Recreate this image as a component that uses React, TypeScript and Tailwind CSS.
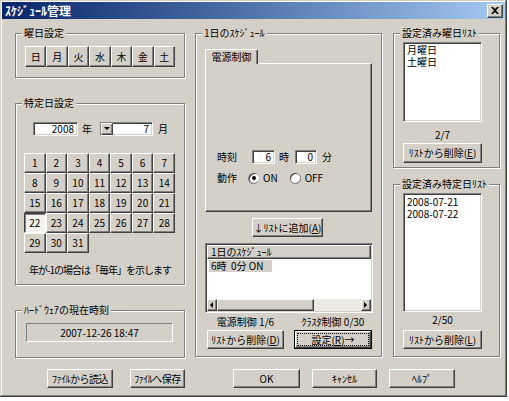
import React from 'react';

const raised =
  'border border-t-white border-l-white border-r-[#404040] border-b-[#404040] shadow-[inset_-1px_-1px_0_#808080]';
const sunken =
  'border border-t-[#808080] border-l-[#808080] border-r-white border-b-white shadow-[inset_1px_1px_0_#404040,inset_-1px_-1px_0_#d4d0c8]';
const etched = 'border border-[#808080] shadow-[inset_1px_1px_0_#fff,1px_1px_0_#fff]';

function Btn({ children, className = '' }: { children: React.ReactNode; className?: string }) {
  return (
    <div className={`flex items-center justify-center whitespace-nowrap bg-[#d4d0c8] ${raised} ${className}`}>{children}</div>
  );
}

function Group({ label, className = '', children }: { label: string; className?: string; children?: React.ReactNode }) {
  return (
    <div className={`relative ${etched} ${className}`}>
      <span className="absolute left-[6px] -top-[8px] bg-[#d4d0c8] px-[2px] leading-[14px] whitespace-nowrap">{label}</span>
      {children}
    </div>
  );
}

function Radio({ checked }: { checked?: boolean }) {
  return (
    <div className="w-[11px] h-[11px] rounded-full bg-[#808080] flex items-center justify-center">
      <div className="w-[10px] h-[10px] rounded-full bg-white flex items-center justify-center shadow-[inset_1px_1px_0_#404040]">
        {checked && <div className="w-[4px] h-[4px] rounded-full bg-black" />}
      </div>
    </div>
  );
}

function Arrow({ dir }: { dir: 'left' | 'right' | 'down' }) {
  const pts = dir === 'left' ? '3,0 0,3 3,6' : dir === 'right' ? '0,0 3,3 0,6' : '0,0 6,0 3,3';
  const w = dir === 'down' ? 7 : 4;
  const h = dir === 'down' ? 4 : 7;
  return (
    <svg width={w} height={h} viewBox={`0 0 ${w} ${h}`}>
      <polygon points={pts} fill="#000" />
    </svg>
  );
}

const weekdays = ['日', '月', '火', '水', '木', '金', '土'];
const days = Array.from({ length: 31 }, (_, i) => i + 1);

export default function App() {
  return (
    <div
      className="w-[509px] h-[401px] bg-white text-black text-[10px] leading-[14px]"
      style={{ fontFamily: '"Noto Sans CJK JP", "Noto Sans", sans-serif' }}
    >
      <div className="w-[507px] h-[397px] bg-[#d4d0c8] p-[2px] flex flex-col shadow-[inset_-1px_-1px_0_#404040,inset_1px_1px_0_#d4d0c8,inset_-2px_-2px_0_#808080,inset_2px_2px_0_#fff]">
        {/* title bar */}
        <div className="h-[17px] flex items-center bg-gradient-to-r from-[#0a246a] to-[#a6caf0] pl-[3px] pr-[2px]">
          <span className="text-white font-bold text-[12px] leading-[16px]">ｽｹｼﾞｭｰﾙ管理</span>
          <div className={`ml-auto w-[16px] h-[14px] ${raised} bg-[#d4d0c8] flex items-center justify-center`}>
            <svg width="8" height="7" viewBox="0 0 8 7">
              <path d="M0 0 L2 0 L4 2 L6 0 L8 0 L5 3.5 L8 7 L6 7 L4 5 L2 7 L0 7 L3 3.5 Z" fill="#000" />
            </svg>
          </div>
        </div>

        {/* main */}
        <div className="flex items-start mt-[14px] ml-[13px]">
          {/* left column */}
          <div className="w-[170px] flex flex-col">
            <Group label="曜日設定" className="h-[45px] pl-[9px] pt-[12px]">
              <div className="grid grid-cols-7 w-[150px] h-[21px]">
                {weekdays.map(d => (
                  <Btn key={d} className="h-[21px]">{d}</Btn>
                ))}
              </div>
            </Group>

            <Group label="特定日設定" className="mt-[25px] h-[182px] pt-[18px]">
              <div className="flex items-center ml-[17px] h-[14px]">
                <div className={`w-[45px] h-[14px] bg-white ${sunken} flex items-center justify-end pr-[3px]`}>2008</div>
                <span className="ml-[4px]">年</span>
                <div className={`ml-[8px] w-[53px] h-[14px] bg-white ${sunken} flex items-center`}>
                  <div className={`w-[12px] h-[12px] ${raised} bg-[#d4d0c8] flex items-center justify-center`}>
                    <Arrow dir="down" />
                  </div>
                  <span className="ml-auto pr-[3px]">7</span>
                </div>
                <span className="ml-[5px]">月</span>
              </div>
              <div className="grid grid-cols-7 w-[151px] ml-[8px] mt-[17px]">
                {days.map(d =>
                  d === 22 ? (
                    <div
                      key={d}
                      className="h-[20px] flex items-center justify-center bg-[#f4f3ef] border border-t-[#404040] border-l-[#404040] border-r-white border-b-white shadow-[inset_1px_1px_0_#808080]"
                    >
                      {d}
                    </div>
                  ) : (
                    <Btn key={d} className="h-[20px]">{d}</Btn>
                  )
                )}
              </div>
              <div className="mt-[10px] text-center whitespace-nowrap tracking-[-1px]">年が-1の場合は「毎年」を示します</div>
            </Group>

            <Group label="ﾊｰﾄﾞｳｪｱの現在時刻" className="mt-[25px] h-[48px] pt-[12px]">
              <div className="ml-[10px] w-[147px] h-[19px] flex items-center justify-center border border-t-[#808080] border-l-[#808080] border-r-white border-b-white">
                2007-12-26 18:47
              </div>
            </Group>
          </div>

          {/* middle column */}
          <Group label="1日のｽｹｼﾞｭｰﾙ" className="ml-[10px] w-[187px] h-[324px] flex flex-col">
            <div className="ml-[9px] mt-[15px] flex flex-col">
              <div className="relative z-10 -mb-[1px] w-[53px] h-[15px] bg-[#d4d0c8] border border-b-0 border-t-white border-l-white border-r-[#404040] shadow-[inset_-1px_0_0_#808080] rounded-t-[2px] flex items-center justify-center">
                電源制御
              </div>
              <div className={`w-[167px] h-[149px] bg-[#d4d0c8] ${raised} pt-[86px] pl-[11px]`}>
                <div className="flex items-center h-[14px]">
                  <span>時刻</span>
                  <div className={`ml-[15px] w-[23px] h-[14px] bg-white ${sunken} flex items-center justify-end pr-[3px]`}>6</div>
                  <span className="ml-[4px]">時</span>
                  <div className={`ml-[6px] w-[22px] h-[14px] bg-white ${sunken} flex items-center justify-end pr-[3px]`}>0</div>
                  <span className="ml-[5px]">分</span>
                </div>
                <div className="flex items-center h-[14px] mt-[7px]">
                  <span>動作</span>
                  <div className="ml-[11px]"><Radio checked /></div>
                  <span className="ml-[4px]">ON</span>
                  <div className="ml-[12px]"><Radio /></div>
                  <span className="ml-[4px]">OFF</span>
                </div>
              </div>
            </div>

            <Btn className="ml-[56px] mt-[6px] w-[71px] h-[19px]">
              ↓ﾘｽﾄに追加(<u>A</u>)
            </Btn>

            <div className={`ml-[9px] mt-[6px] w-[168px] h-[70px] bg-white ${sunken} p-[1px] flex flex-col`}>
              <div className={`h-[14px] bg-[#d4d0c8] ${raised} pl-[3px] flex items-center`}>1日のｽｹｼﾞｭｰﾙ</div>
              <div className="mt-[1px] ml-[2px] w-[63px] h-[12px] bg-[#d4d0c8] flex items-center pl-[2px] leading-[12px] whitespace-nowrap">
                6時&nbsp;&nbsp;0分 ON
              </div>
              <div className="flex-1" />
              <div className="h-[12px] flex">
                <div className={`w-[10px] h-[12px] bg-[#d4d0c8] ${raised} flex items-center justify-center`}>
                  <Arrow dir="left" />
                </div>
                <div className={`w-[97px] h-[12px] bg-[#d4d0c8] ${raised}`} />
                <div className="flex-1 bg-[#ebe9e4]" />
                <div className={`w-[10px] h-[12px] bg-[#d4d0c8] ${raised} flex items-center justify-center`}>
                  <Arrow dir="right" />
                </div>
              </div>
            </div>

            <div className="flex ml-[11px] mt-[3px] h-[12px] leading-[12px]">
              <span className="w-[77px] text-center whitespace-nowrap">電源制御 1/6</span>
              <span className="ml-[10px] w-[78px] text-center whitespace-nowrap">ｸﾗｽﾀ制御 0/30</span>
            </div>

            <div className="flex ml-[11px] mt-[2px]">
              <Btn className="w-[77px] h-[19px]">
                ﾘｽﾄから削除(<u>D</u>)
              </Btn>
              <div className="ml-[10px] w-[78px] h-[19px] border border-black flex">
                <div className={`flex-1 bg-[#d4d0c8] ${raised} p-[1px] flex`}>
                  <div className="flex-1 border border-dotted border-black flex items-center justify-center leading-[11px] whitespace-nowrap">
                    設定(<u>R</u>)→
                  </div>
                </div>
              </div>
            </div>
          </Group>

          {/* right column */}
          <div className="ml-[11px] w-[107px] flex flex-col">
            <Group label="設定済み曜日ﾘｽﾄ" className="h-[135px] pl-[9px] pt-[8px]">
              <div className={`w-[79px] h-[80px] bg-white ${sunken} px-[3px] pt-[1px] leading-[12px]`}>
                <div>月曜日</div>
                <div>土曜日</div>
              </div>
              <div className="w-[79px] mt-[6px] text-center">2/7</div>
              <Btn className="w-[79px] h-[20px] mt-[1px]">
                ﾘｽﾄから削除(<u>E</u>)
              </Btn>
            </Group>

            <Group label="設定済み特定日ﾘｽﾄ" className="mt-[16px] h-[173px] pl-[9px] pt-[8px]">
              <div className={`w-[79px] h-[119px] bg-white ${sunken} px-[3px] pt-[2px] leading-[12px]`}>
                <div>2008-07-21</div>
                <div>2008-07-22</div>
              </div>
              <div className="w-[79px] mt-[1px] text-center">2/50</div>
              <Btn className="w-[79px] h-[19px] mt-[3px]">
                ﾘｽﾄから削除(<u>L</u>)
              </Btn>
            </Group>
          </div>
        </div>

        {/* bottom buttons */}
        <div className="flex mt-[11px] ml-[45px]">
          <Btn className="w-[66px] h-[19px] tracking-[-0.5px]">ﾌｧｲﾙから読込</Btn>
          <Btn className="ml-[17px] w-[55px] h-[19px] tracking-[-0.5px]">ﾌｧｲﾙへ保存</Btn>
          <Btn className="ml-[48px] w-[67px] h-[19px]">OK</Btn>
          <Btn className="ml-[12px] w-[65px] h-[19px]">ｷｬﾝｾﾙ</Btn>
          <Btn className="ml-[12px] w-[66px] h-[19px]">ﾍﾙﾌﾟ</Btn>
        </div>
      </div>
    </div>
  );
}
